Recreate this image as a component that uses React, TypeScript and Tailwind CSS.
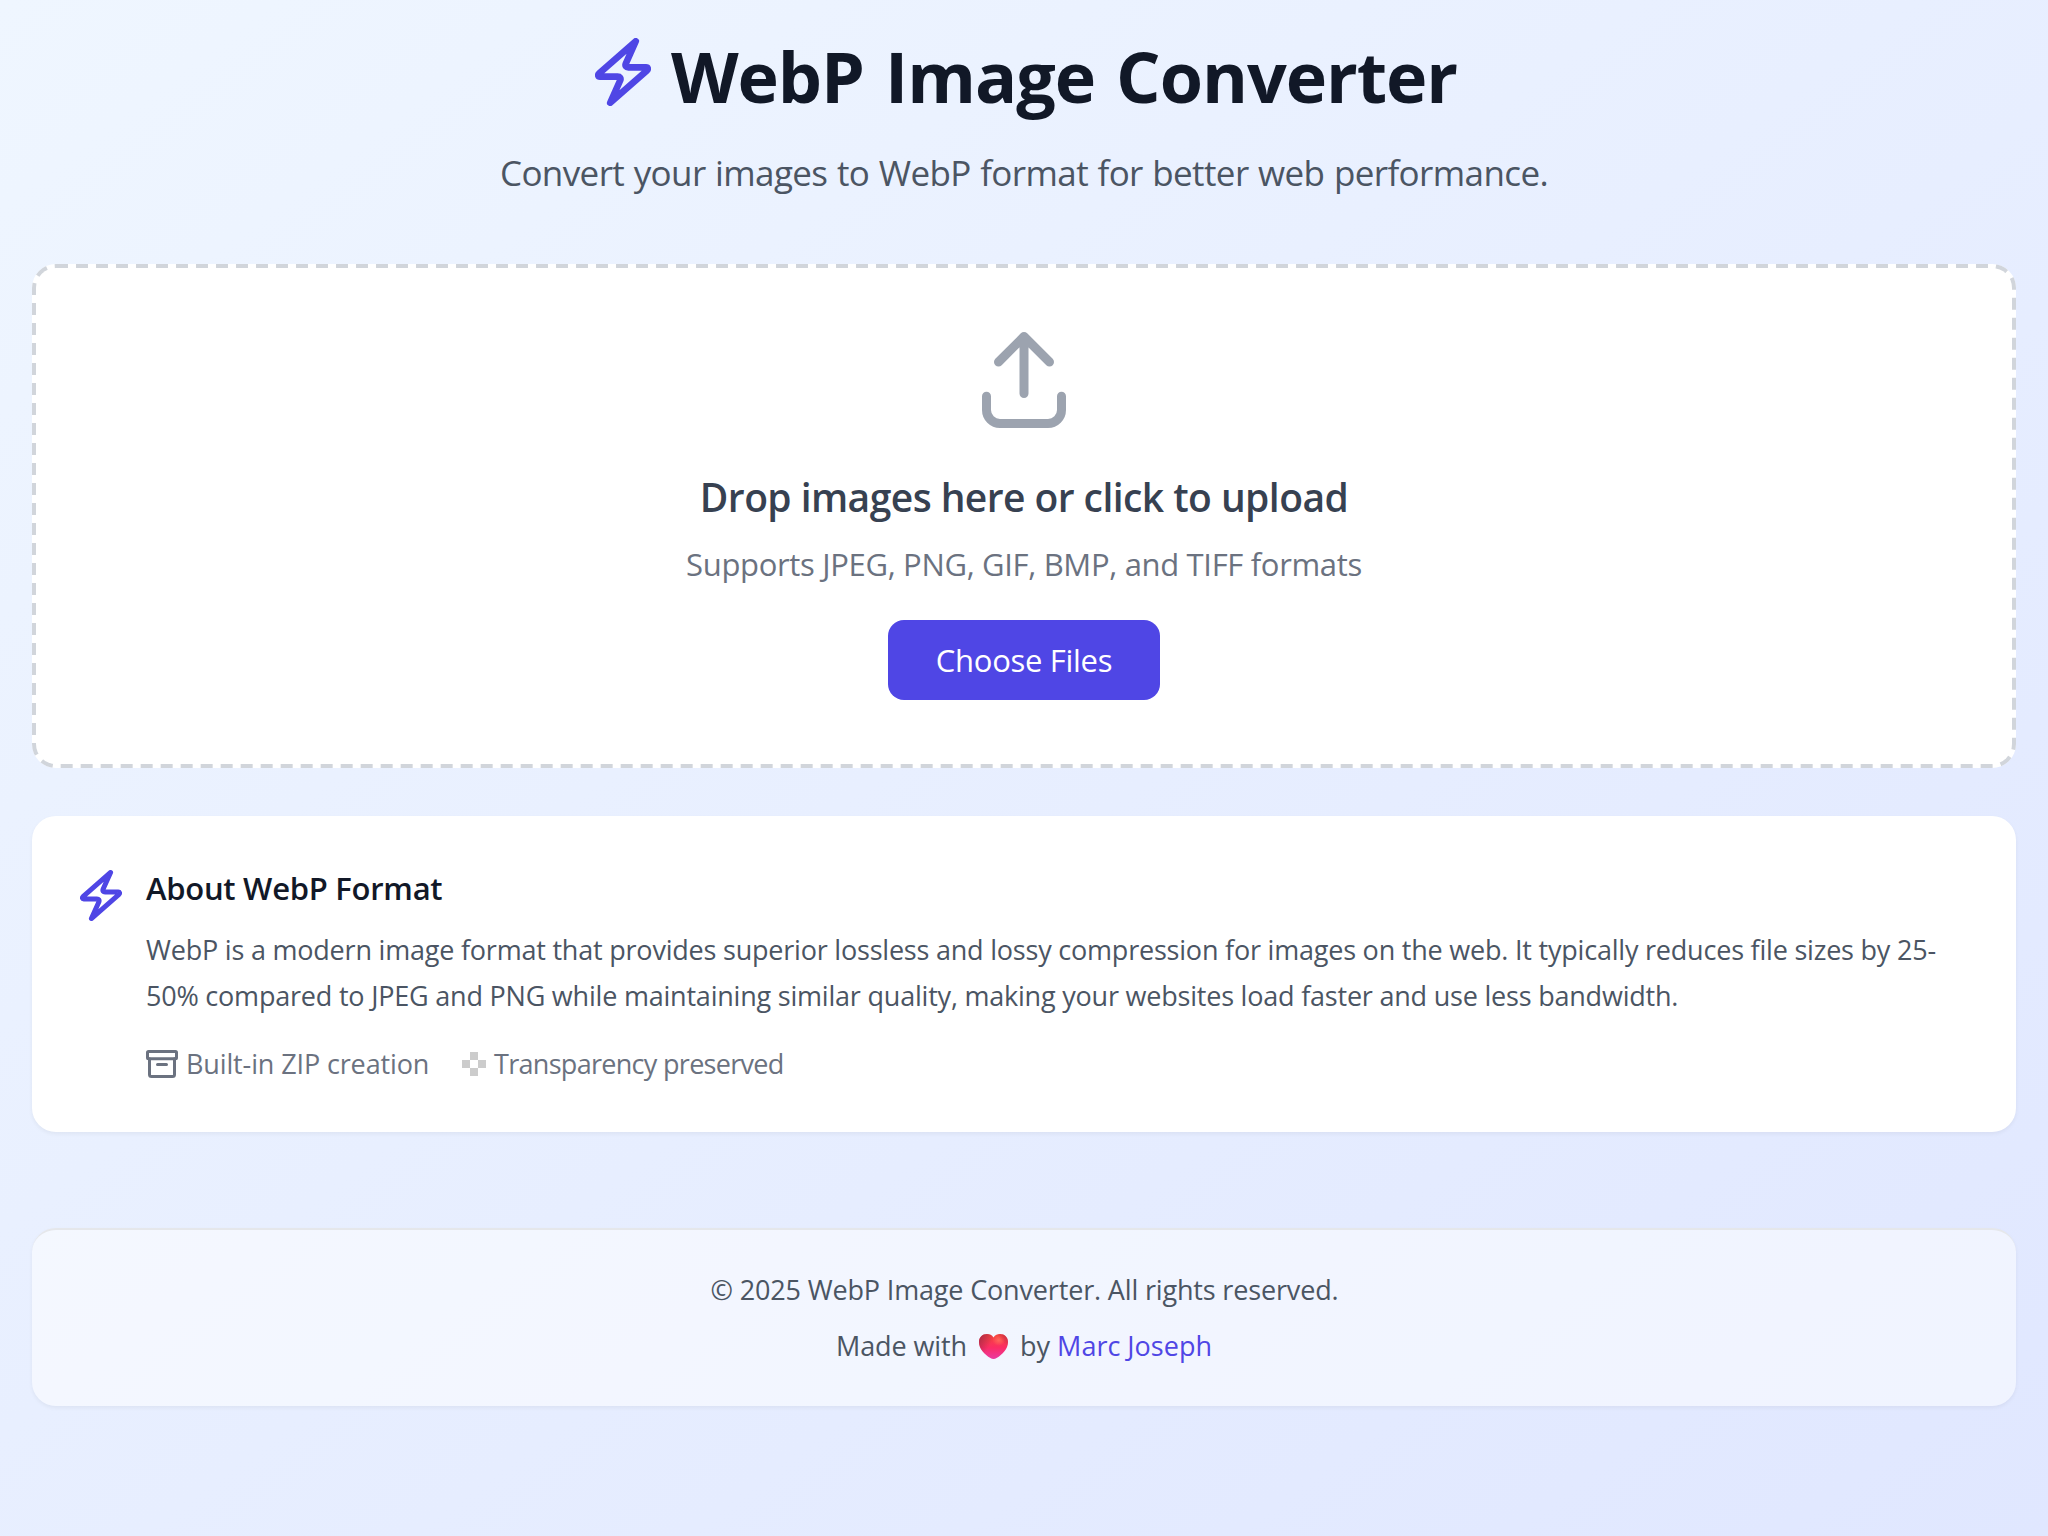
import React from "react";

function BoltIcon({ className }: { className: string }) {
  return (
    <svg className={className} viewBox="0 0 56 68" fill="none" stroke="currentColor" strokeWidth={6.6} strokeLinecap="round" strokeLinejoin="round">
      <path d="M40.8 3.2 L4 35.6 C2.6 37 3.1 38.6 5 38.6 H22.6 C25 38.6 26 40.2 25.3 42.2 L15.2 64.8 L52 32.4 C53.4 31 52.9 29.4 51 29.4 H33.4 C31 29.4 30 27.8 30.7 25.8 Z" />
    </svg>
  );
}

function UploadIcon() {
  return (
    <svg className="size-24 text-[#9ca3af]" viewBox="0 0 96 96" fill="none" stroke="currentColor" strokeWidth={9} strokeLinecap="round" strokeLinejoin="round">
      <path d="M22.5 30 L48 4.5 L73.5 30 M48 4.5 V61.5" />
      <path d="M10.5 64.3 V78 A13.5 13.5 0 0 0 24 91.5 H72 A13.5 13.5 0 0 0 85.5 78 V64.3" />
    </svg>
  );
}

function ArchiveIcon() {
  return (
    <svg className="h-7 w-8" viewBox="0 0 32 28" fill="none" stroke="currentColor" strokeWidth={3} strokeLinecap="round" strokeLinejoin="round">
      <rect x="1.5" y="1.5" width="29" height="7.2" rx="1" />
      <path d="M3.5 8.7 V24.5 A2 2 0 0 0 5.5 26.5 H26.5 A2 2 0 0 0 28.5 24.5 V8.7 M11.5 14.4 H20.5" />
    </svg>
  );
}

function CheckerIcon() {
  return (
    <span className="grid size-6 grid-cols-3 grid-rows-3">
      {Array.from({ length: 9 }, (_, i) => (
        <span key={i} className={i % 2 ? "bg-[#cccccc]" : "bg-white"} />
      ))}
    </span>
  );
}

function Heart() {
  return (
    <svg className="h-[25px] w-[29px]" viewBox="0 0 29 25">
      <defs>
        <linearGradient id="heart" x1="0" y1="0" x2="0" y2="1">
          <stop offset="0.1" stopColor="#f8433f" />
          <stop offset="0.55" stopColor="#fb2c66" />
          <stop offset="1" stopColor="#ea3ba2" />
        </linearGradient>
        <radialGradient id="shine" cx="0.68" cy="0.25" r="0.22">
          <stop offset="0" stopColor="#ff665a" />
          <stop offset="1" stopColor="#ff665a" stopOpacity="0" />
        </radialGradient>
        <linearGradient id="shade" x1="0" y1="0.2" x2="0.4" y2="0.4">
          <stop offset="0" stopColor="#a82848" stopOpacity="0.85" />
          <stop offset="1" stopColor="#a82848" stopOpacity="0" />
        </linearGradient>
        <linearGradient id="edge" x1="1" y1="0.15" x2="0.8" y2="0.3">
          <stop offset="0" stopColor="#b92a48" stopOpacity="0.7" />
          <stop offset="1" stopColor="#b92a48" stopOpacity="0" />
        </linearGradient>
      </defs>
      {["url(#heart)", "url(#shine)", "url(#shade)", "url(#edge)"].map((fill) => (
        <path key={fill} fill={fill} d="M14.5 3.4 C12.8 1 10.6 0 8 0 C3.4 0 0 3.3 0 8 C0 15 5.6 20.4 11.4 24.1 C13.4 25.3 15.6 25.3 17.6 24.1 C23.4 20.4 29 15 29 8 C29 3.3 25.6 0 21 0 C18.4 0 16.2 1 14.5 3.4 Z" />
      ))}
    </svg>
  );
}

export default function App() {
  return (
    <div className="min-h-screen bg-linear-to-br/srgb from-[#eff6ff] to-[#e0e7ff] px-8 pt-8 font-['Segoe_UI','Open_Sans',sans-serif]">
      <header className="flex h-[232px] flex-col items-center">
        <h1 className="-mt-px flex h-[90px] items-center gap-5 pl-1 text-[70px] font-bold tracking-[-1.05px] [word-spacing:4px] text-[#111827]">
          <BoltIcon className="-mt-2 h-[68px] w-14 text-[#4f46e5]" />
          <span className="whitespace-nowrap">WebP Image Converter</span>
        </h1>
        <p className="mt-6 whitespace-nowrap text-[35px] leading-14 tracking-[-0.61px] [word-spacing:1px] text-[#4b5563]">
          Convert your images to WebP format for better web performance.
        </p>
      </header>

      <section className="relative flex h-[504px] flex-col items-center rounded-3xl bg-white pt-[68px]">
        <div className="pointer-events-none absolute left-0 top-0 h-1/2 w-1/2 origin-top-left scale-200 rounded-xl border-2 border-dashed border-[#d1d5db]" />
        <UploadIcon />
        <h3 className="mt-[41px] whitespace-nowrap text-[39px] font-semibold leading-14 tracking-[-0.56px] text-[#374151]">Drop images here or click to upload</h3>
        <p className="mt-[15px] whitespace-nowrap text-[31px] leading-12 tracking-[-0.33px] text-[#6b7280]">Supports JPEG, PNG, GIF, BMP, and TIFF formats</p>
        <button className="mt-8 flex h-20 w-68 items-center justify-center whitespace-nowrap rounded-2xl bg-[#4f46e5] text-[31px] leading-12 tracking-[-0.3px] text-white">Choose Files</button>
      </section>

      <section className="mt-12 flex gap-6 rounded-3xl bg-white p-12 shadow-[0_2px_4px_rgba(0,0,0,0.05)]">
        <BoltIcon className="mt-1.5 h-[51px] w-[42px] shrink-0 text-[#4f46e5]" />
        <div>
          <h3 className="text-[31px] font-semibold leading-12 tracking-[-0.27px] text-[#111827]">About WebP Format</h3>
          <p className="mt-[15px] whitespace-nowrap text-[27px] leading-[45.5px] tracking-[-0.21px] text-[#4b5563]">
            WebP is a modern image format that provides superior lossless and lossy compression for images on the web. It typically reduces file sizes by 25-
            <br />
            50% compared to JPEG and PNG while maintaining similar quality, making your websites load faster and use less bandwidth.
          </p>
          <div className="mt-[26px] flex gap-8 text-[27px] leading-10 text-[#6b7280]">
            <span className="flex items-center gap-2">
              <ArchiveIcon />
              <span className="w-[244px] whitespace-nowrap tracking-[-0.13px]">Built-in ZIP creation</span>
            </span>
            <span className="flex items-center gap-2">
              <CheckerIcon />
              <span className="whitespace-nowrap tracking-[-0.7px]">Transparency preserved</span>
            </span>
          </div>
        </div>
      </section>

      <footer className="mt-24 flex flex-col items-center gap-4 rounded-3xl border-t-2 border-[#e5e7eb] bg-white/50 py-10 text-[27px] leading-10 text-[#4b5563] shadow-[0_2px_4px_rgba(0,0,0,0.05)]">
        <p className="whitespace-nowrap pl-px tracking-[-0.16px]">© 2025 WebP Image Converter. All rights reserved.</p>
        <p className="flex items-center whitespace-pre">
          <span className="tracking-[-0.1px]">Made with</span>
          <span className="mx-3 flex"><Heart /></span>
          <span>by </span>
          <a className="text-[#4f46e5]">Marc Joseph</a>
        </p>
      </footer>
    </div>
  );
}
